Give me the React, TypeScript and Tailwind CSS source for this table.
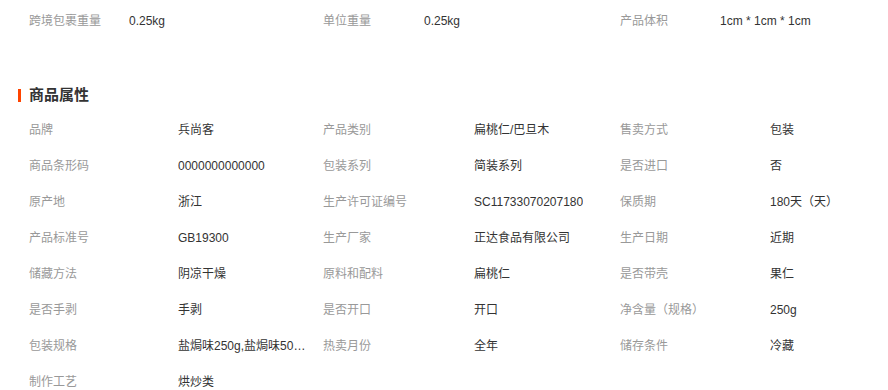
import React from 'react';

type Attr = [string, string];

const TOP: Attr[] = [
  ['跨境包裹重量', '0.25kg'],
  ['单位重量', '0.25kg'],
  ['产品体积', '1cm * 1cm * 1cm'],
];

const ATTRS: Attr[] = [
  ['品牌', '兵尚客'],
  ['产品类别', '扁桃仁/巴旦木'],
  ['售卖方式', '包装'],
  ['商品条形码', '0000000000000'],
  ['包装系列', '简装系列'],
  ['是否进口', '否'],
  ['原产地', '浙江'],
  ['生产许可证编号', 'SC11733070207180'],
  ['保质期', '180天（天）'],
  ['产品标准号', 'GB19300'],
  ['生产厂家', '正达食品有限公司'],
  ['生产日期', '近期'],
  ['储藏方法', '阴凉干燥'],
  ['原料和配料', '扁桃仁'],
  ['是否带壳', '果仁'],
  ['是否手剥', '手剥'],
  ['是否开口', '开口'],
  ['净含量（规格）', '250g'],
  ['包装规格', '盐焗味250g,盐焗味500g'],
  ['热卖月份', '全年'],
  ['储存条件', '冷藏'],
  ['制作工艺', '烘炒类'],
];

const COL_W = ['w-[294px]', 'w-[297px]', 'w-[250px]'];
const LABEL_W = ['w-[149px]', 'w-[151px]', 'w-[150px]'];
const TOP_LABEL_W = ['w-[100px]', 'w-[101px]', 'w-[100px]'];

export default function App() {
  const rows: Attr[][] = [];
  for (let i = 0; i < ATTRS.length; i += 3) rows.push(ATTRS.slice(i, i + 3));

  return (
    <div
      className="w-[888px] h-[390px] overflow-hidden bg-white text-[12px] text-[#333]"
      style={{ fontFamily: '"Liberation Sans", "Noto Sans CJK SC", sans-serif' }}
    >
      {/* Logistics row */}
      <div className="flex h-[42px] items-center pl-[29px]">
        {TOP.map(([label, value], i) => (
          <div key={label} className={`flex ${COL_W[i]}`}>
            <span className={`${TOP_LABEL_W[i]} text-[#999]`}>{label}</span>
            <span>{value}</span>
          </div>
        ))}
      </div>

      {/* Section header */}
      <div className="mt-[43px] flex h-[20px] items-center pl-[18px]">
        <span className="h-[13px] w-[3px] bg-[#ff4400]" />
        <span className="ml-[8px] text-[15px] font-bold text-[#333]">商品属性</span>
      </div>

      {/* Attributes */}
      <div className="mt-[7px] pl-[29px]">
        {rows.map((row, r) => (
          <div key={r} className="flex h-[36px] items-center">
            {row.map(([label, value], i) => (
              <div key={label} className={`flex ${COL_W[i]}`}>
                <span className={`${LABEL_W[i]} shrink-0 text-[#999]`}>{label}</span>
                <span className="max-w-[128px] truncate">{value}</span>
              </div>
            ))}
          </div>
        ))}
      </div>
    </div>
  );
}
